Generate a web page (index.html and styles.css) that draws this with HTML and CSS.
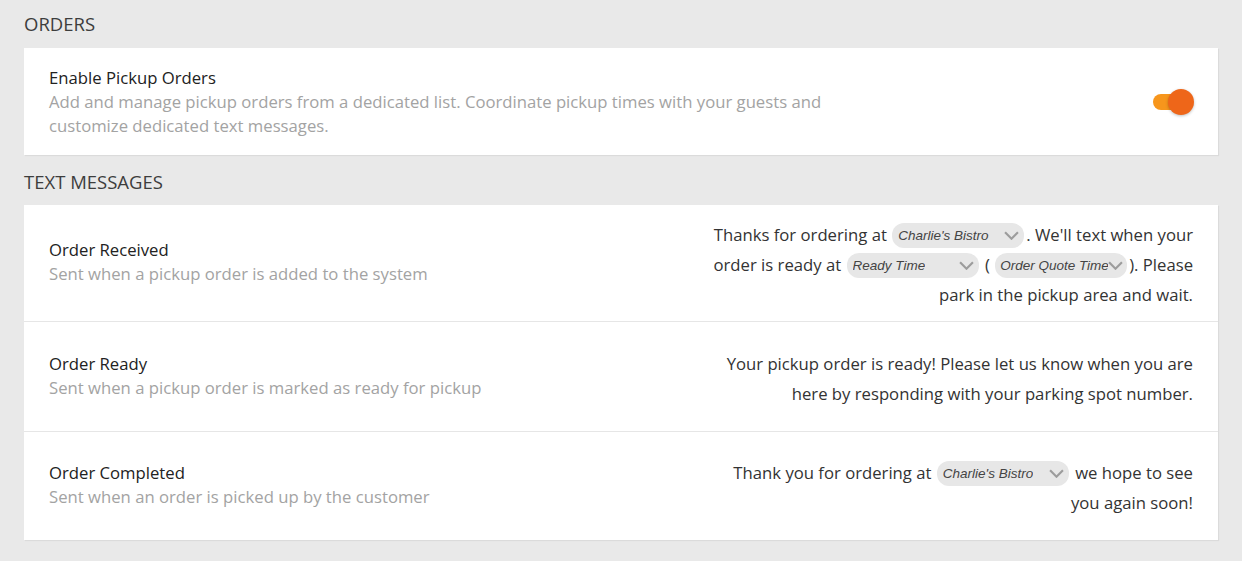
FILE: index.html
```html
<!DOCTYPE html>
<html>
<head>
<meta charset="utf-8">
<link rel="stylesheet" href="styles.css">
</head>
<body>
<div class="page">
  <h2 class="section-title first">ORDERS</h2>
  <div class="card">
    <div class="row toggle-row">
      <div class="info">
        <div class="title">Enable Pickup Orders</div>
        <div class="desc">Add and manage pickup orders from a dedicated list. Coordinate pickup times with your guests and<br>customize dedicated text messages.</div>
      </div>
      <div class="toggle"><span class="track"></span><span class="knob"></span></div>
    </div>
  </div>

  <h2 class="section-title">TEXT MESSAGES</h2>
  <div class="card">
    <div class="row msg-row r1">
      <div class="info">
        <div class="title">Order Received</div>
        <div class="desc">Sent when a pickup order is added to the system</div>
      </div>
      <div class="message">
        Thanks for ordering at <span class="select"><span class="sel-text">Charlie's Bistro</span><svg class="chev" viewBox="0 0 14 8"><path d="M1 1 L7 7 L13 1"/></svg></span>. We'll text when your<br>
        order is ready at <span class="select"><span class="sel-text">Ready Time</span><svg class="chev" viewBox="0 0 14 8"><path d="M1 1 L7 7 L13 1"/></svg></span> ( <span class="select tight"><span class="sel-text">Order Quote Time</span><svg class="chev" viewBox="0 0 14 8"><path d="M1 1 L7 7 L13 1"/></svg></span>). Please<br>
        park in the pickup area and wait.
      </div>
    </div>
    <div class="row msg-row">
      <div class="info">
        <div class="title">Order Ready</div>
        <div class="desc">Sent when a pickup order is marked as ready for pickup</div>
      </div>
      <div class="message">
        Your pickup order is ready! Please let us know when you are<br>
        here by responding with your parking spot number.
      </div>
    </div>
    <div class="row msg-row last">
      <div class="info">
        <div class="title">Order Completed</div>
        <div class="desc">Sent when an order is picked up by the customer</div>
      </div>
      <div class="message">
        Thank you for ordering at <span class="select"><span class="sel-text">Charlie's Bistro</span><svg class="chev" viewBox="0 0 14 8"><path d="M1 1 L7 7 L13 1"/></svg></span> we hope to see<br>
        you again soon!
      </div>
    </div>
  </div>
</div>
</body>
</html>
```

FILE: styles.css
```css
html, body {
  margin: 0;
  padding: 0;
}
body {
  background: #e9e9e9;
  font-family: "Open Sans", "Noto Sans", sans-serif;
  color: #333;
  width: 1242px;
  height: 561px;
  overflow: hidden;
}
.page {
  padding: 0 24px;
}
.section-title {
  margin: 0;
  font-size: 18.5px;
  font-weight: 400;
  color: #3d3d3d;
  height: 50px;
  line-height: 24px;
  padding-top: 15px;
  box-sizing: border-box;
}
.section-title.first {
  height: 48px;
  padding-top: 12px;
}
.card {
  background: #fff;
  box-shadow: 1px 1px 1px rgba(0,0,0,0.06);
}
.row {
  display: flex;
  align-items: center;
  justify-content: space-between;
  padding: 0 25px;
  box-sizing: border-box;
}
.toggle-row {
  height: 107px;
  padding-top: 1px;
}
.title {
  font-size: 16.7px;
  line-height: 24px;
  color: #222;
}
.desc {
  font-size: 16.7px;
  line-height: 24px;
  color: #a3a3a3;
}
.toggle {
  position: relative;
  width: 44px;
  height: 28px;
  margin-right: -2px;
}
.toggle .track {
  position: absolute;
  left: 2px;
  top: 6px;
  width: 32px;
  height: 16px;
  border-radius: 8px;
  background: #f7961c;
}
.toggle .knob {
  position: absolute;
  right: 1px;
  top: 1px;
  width: 26px;
  height: 26px;
  border-radius: 50%;
  background: #ee6619;
  box-shadow: 0 1px 3px rgba(0,0,0,0.25);
}
.msg-row {
  min-height: 110px;
  padding-top: 14px;
  padding-bottom: 10px;
  border-top: 1px solid #e6e6e6;
}
.msg-row.r1 {
  border-top: none;
  min-height: 116px;
}
.msg-row.last {
  min-height: 109px;
}
.msg-row .info {
  margin-bottom: 6px;
}
.message {
  text-align: right;
  font-size: 16.7px;
  line-height: 30px;
  color: #333;
}
.select {
  display: inline-flex;
  align-items: center;
  justify-content: space-between;
  width: 132px;
  height: 25px;
  box-sizing: border-box;
  padding: 0 5px 0 6px;
  margin: 0 2px 0 1px;
  border-radius: 12px;
  background: #e7e7e7;
  vertical-align: middle;
  position: relative;
  top: -1px;
  text-align: left;
}
.sel-text {
  font-family: "Liberation Sans", Arial, sans-serif;
  font-style: italic;
  font-size: 13.5px;
  color: #444;
  white-space: nowrap;
  overflow: hidden;
}
.chev {
  width: 15px;
  height: 9px;
  flex: none;
}
.chev path {
  fill: none;
  stroke: #9c9c9c;
  stroke-width: 2;
}
.select.tight {
  padding-left: 5px;
  padding-right: 4px;
}
```
